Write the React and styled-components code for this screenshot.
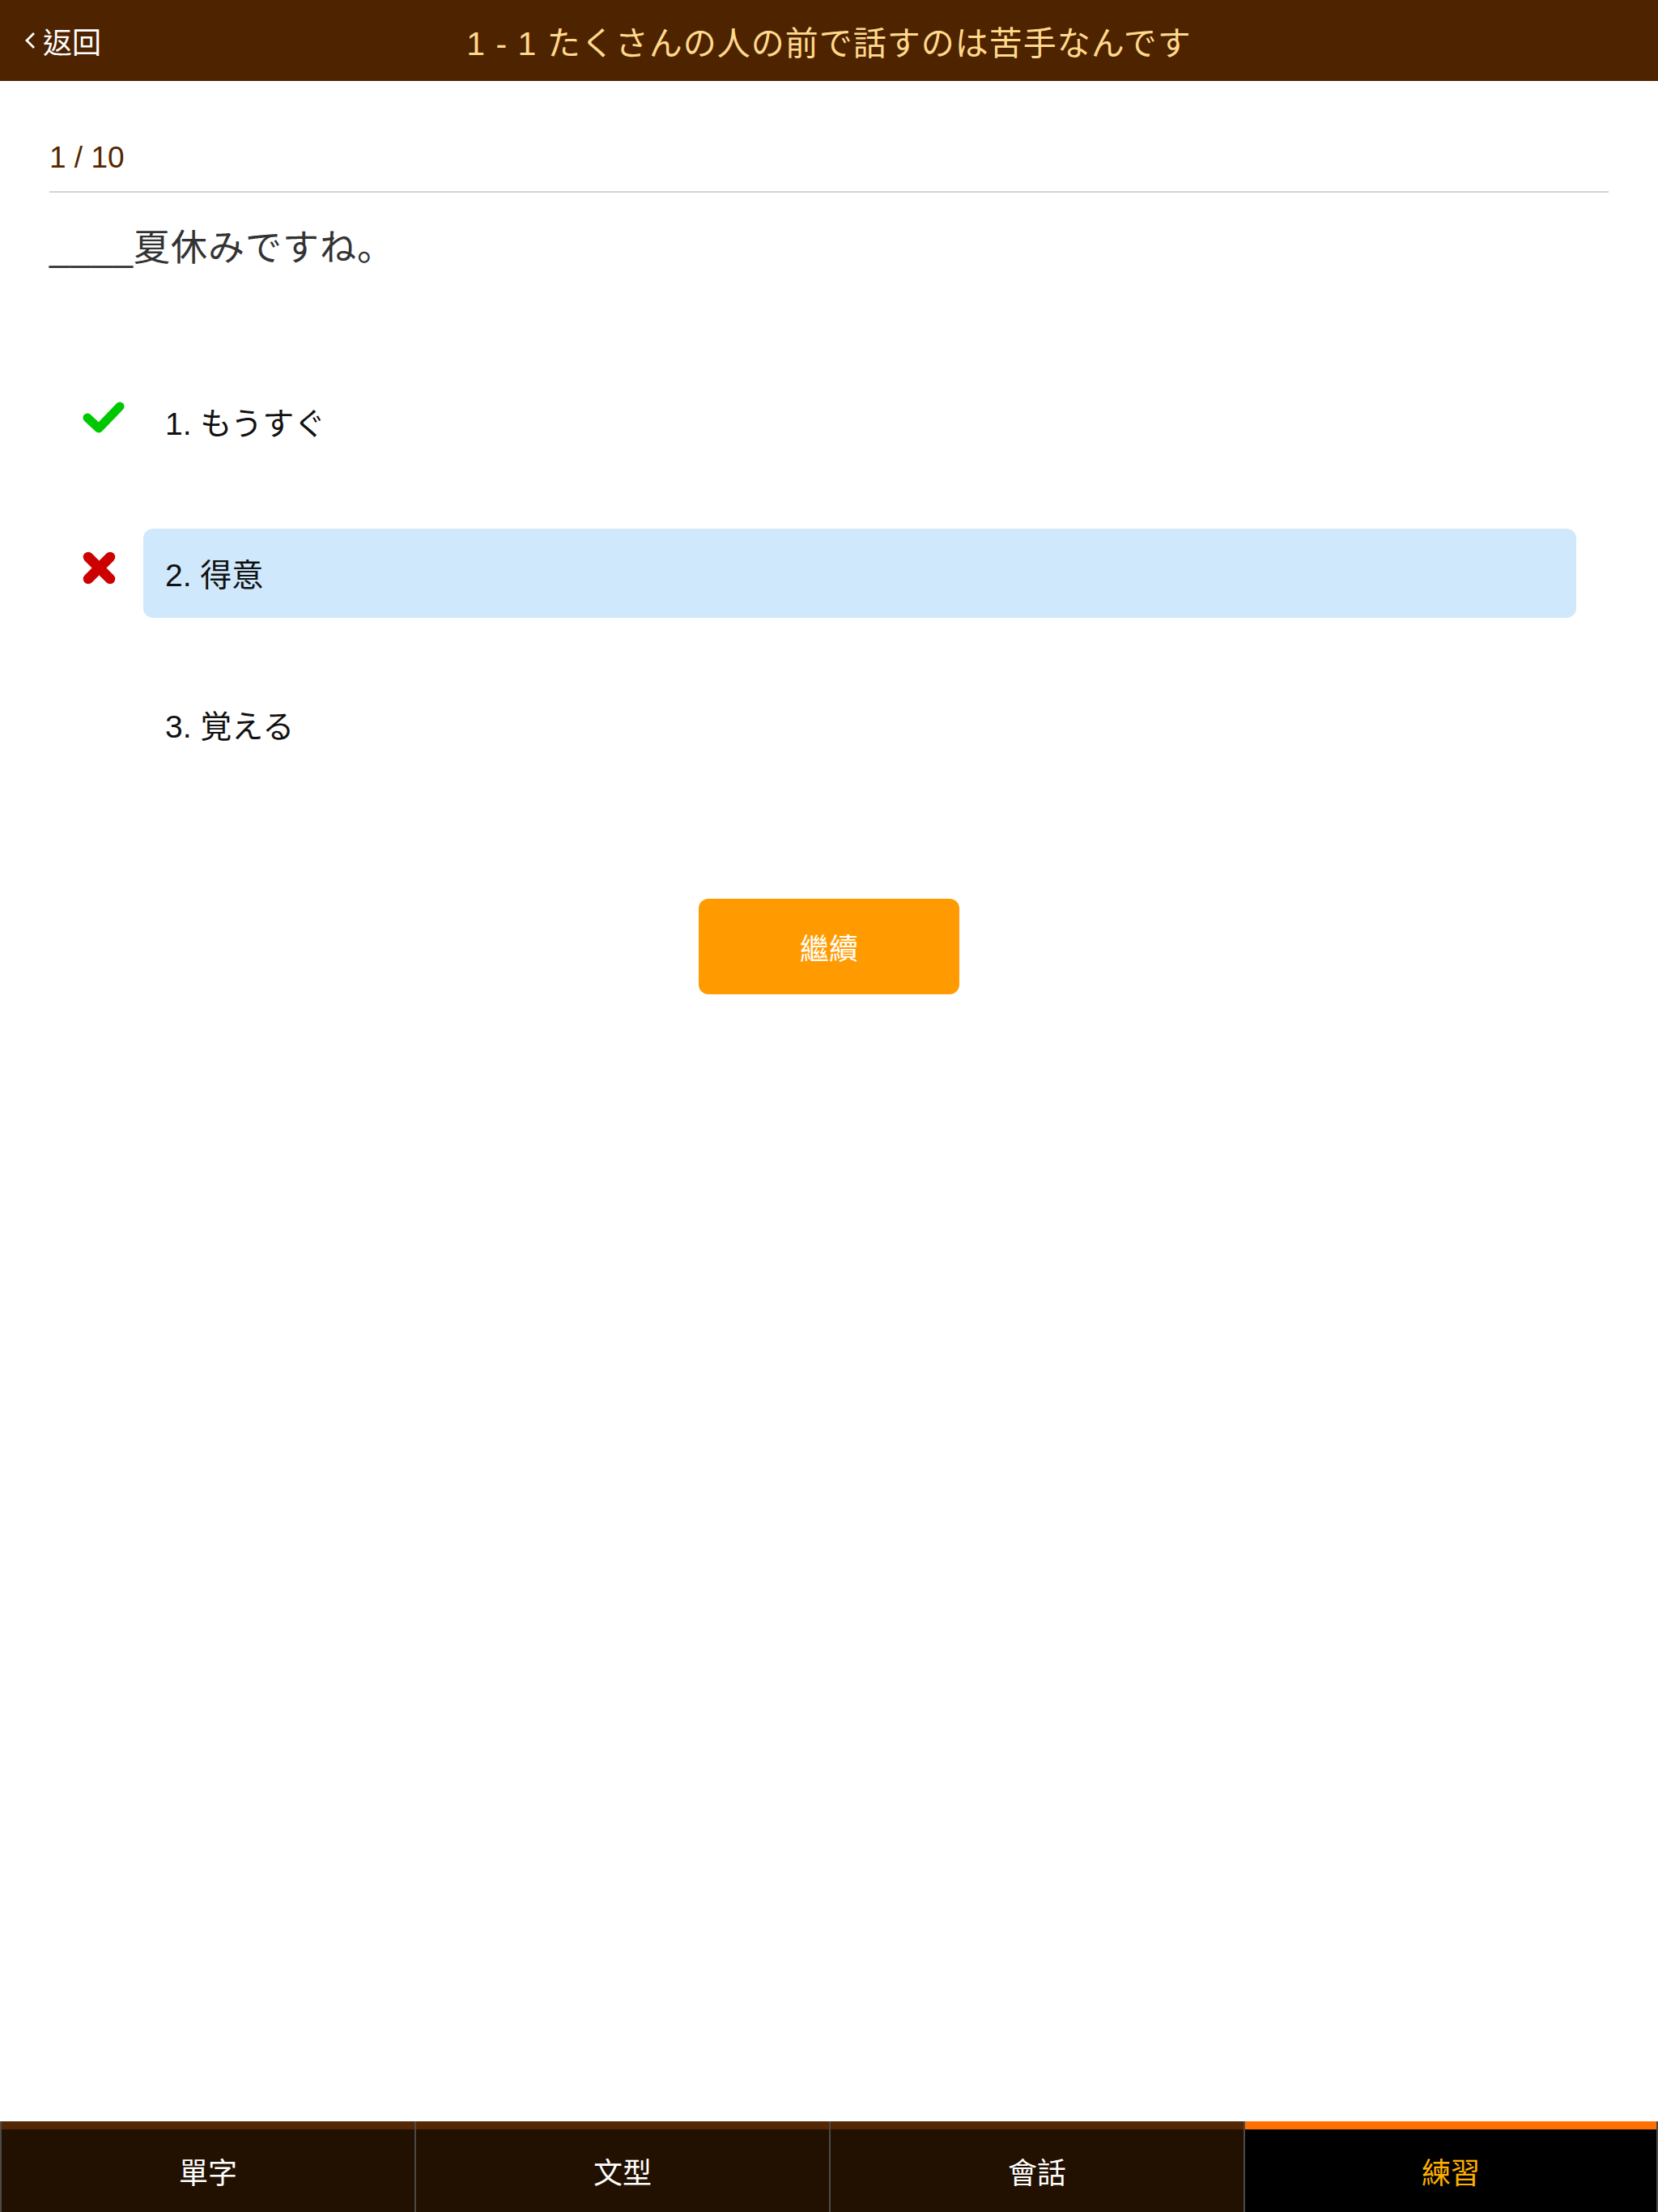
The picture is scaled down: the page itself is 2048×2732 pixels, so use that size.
import React from 'react';
import styled, { createGlobalStyle } from 'styled-components';

const GlobalStyle = createGlobalStyle`
  html, body {
    margin: 0;
    padding: 0;
    background: #fff;
  }
  body {
    font-family: "Liberation Sans", "Noto Sans CJK JP", sans-serif;
  }
  * {
    box-sizing: border-box;
  }
`;

const Page = styled.div`
  display: flex;
  flex-direction: column;
  min-height: 100vh;
`;

const Header = styled.header`
  display: grid;
  grid-template-columns: 1fr auto 1fr;
  align-items: center;
  height: 100px;
  background: #4e2300;
`;

const BackButton = styled.div`
  display: flex;
  align-items: center;
  gap: 9px;
  padding-left: 30px;
  color: #fff;
  font-size: 36px;
  font-family: "Noto Sans CJK TC", sans-serif;
`;

const Title = styled.h1`
  margin: 0;
  font-weight: 400;
  font-size: 41px;
  color: #ffd98c;
  letter-spacing: 1px;
`;

const Main = styled.main`
  flex: 1;
  padding: 0 61px;
`;

const Counter = styled.div`
  margin-top: 71px;
  padding-bottom: 17px;
  line-height: 48px;
  font-size: 37px;
  color: #552600;
  border-bottom: 2px solid #d3d3d3;
`;

const Question = styled.p`
  margin: 39px 0 0;
  line-height: 60px;
  font-size: 45px;
  color: #333;
  letter-spacing: 1px;
`;

const Options = styled.ul`
  list-style: none;
  margin: 129px 0 0;
  padding: 0 40px;
  display: flex;
  flex-direction: column;
  gap: 77px;
`;

const OptionRow = styled.li`
  display: flex;
  align-items: center;
  height: 110px;
`;

const Mark = styled.div`
  width: 76px;
  flex: none;
  display: flex;
  align-items: center;
  margin-bottom: 12px;
`;

const Answer = styled.div`
  flex: 1;
  height: 100%;
  display: flex;
  align-items: center;
  padding-left: 27px;
  padding-bottom: 2px;
  border-radius: 12px;
  font-size: 39px;
  color: #111;
  background: ${(p) => (p.$selected ? '#cfe8fc' : 'transparent')};
`;

const ContinueButton = styled.button`
  display: block;
  margin: 160px auto 0;
  width: 322px;
  height: 118px;
  border: none;
  border-radius: 12px;
  background: #ff9b00;
  color: #fff;
  font-size: 36px;
  font-family: "Noto Sans CJK TC", sans-serif;
`;

const TabBar = styled.nav`
  display: grid;
  grid-template-columns: repeat(4, 1fr);
  height: 112px;
`;

const Tab = styled.div`
  display: flex;
  flex-direction: column;
  border-left: 2px solid #4a4a4a;
  background: ${(p) => (p.$active ? '#000' : '#221000')};
  &:last-child {
    border-right: 2px solid #4a4a4a;
  }
`;

const TabStrip = styled.div`
  height: 10px;
  background: ${(p) => (p.$active ? '#ff7000' : '#552805')};
`;

const TabLabel = styled.div`
  flex: 1;
  display: flex;
  align-items: center;
  justify-content: center;
  font-size: 36px;
  font-family: "Noto Sans CJK TC", sans-serif;
  color: ${(p) => (p.$active ? '#ffb000' : '#fff')};
`;

const Chevron = () => (
  <svg width="14" height="22" viewBox="0 0 14 22">
    <polyline points="12,2 3,11 12,20" fill="none" stroke="#fff" strokeWidth="2.8" />
  </svg>
);

const CheckMark = () => (
  <svg width="54" height="42" viewBox="0 0 54 42">
    <polyline
      points="7,22 21,35 47,8"
      fill="none"
      stroke="#00c800"
      strokeWidth="11"
      strokeLinecap="round"
      strokeLinejoin="round"
    />
  </svg>
);

const CrossMark = () => (
  <svg width="44" height="44" viewBox="0 0 44 44">
    <g stroke="#cc0000" strokeWidth="12.5" strokeLinecap="round">
      <line x1="8" y1="8" x2="35" y2="35" />
      <line x1="35" y1="8" x2="8" y2="35" />
    </g>
  </svg>
);

const options = [
  { label: '1. もうすぐ', mark: 'correct' },
  { label: '2. 得意', mark: 'wrong', selected: true },
  { label: '3. 覚える' },
];

const tabs = ['單字', '文型', '會話', '練習'];

export default function App() {
  return (
    <Page>
      <GlobalStyle />
      <Header>
        <BackButton>
          <Chevron />
          返回
        </BackButton>
        <Title>1 - 1 たくさんの人の前で話すのは苦手なんです</Title>
        <div />
      </Header>

      <Main>
        <Counter>1 / 10</Counter>
        <Question>____夏休みですね。</Question>

        <Options>
          {options.map((o) => (
            <OptionRow key={o.label}>
              <Mark>
                {o.mark === 'correct' && <CheckMark />}
                {o.mark === 'wrong' && <CrossMark />}
              </Mark>
              <Answer $selected={o.selected}>{o.label}</Answer>
            </OptionRow>
          ))}
        </Options>

        <ContinueButton>繼續</ContinueButton>
      </Main>

      <TabBar>
        {tabs.map((t, i) => (
          <Tab key={t} $active={i === 3}>
            <TabStrip $active={i === 3} />
            <TabLabel $active={i === 3}>{t}</TabLabel>
          </Tab>
        ))}
      </TabBar>
    </Page>
  );
}
